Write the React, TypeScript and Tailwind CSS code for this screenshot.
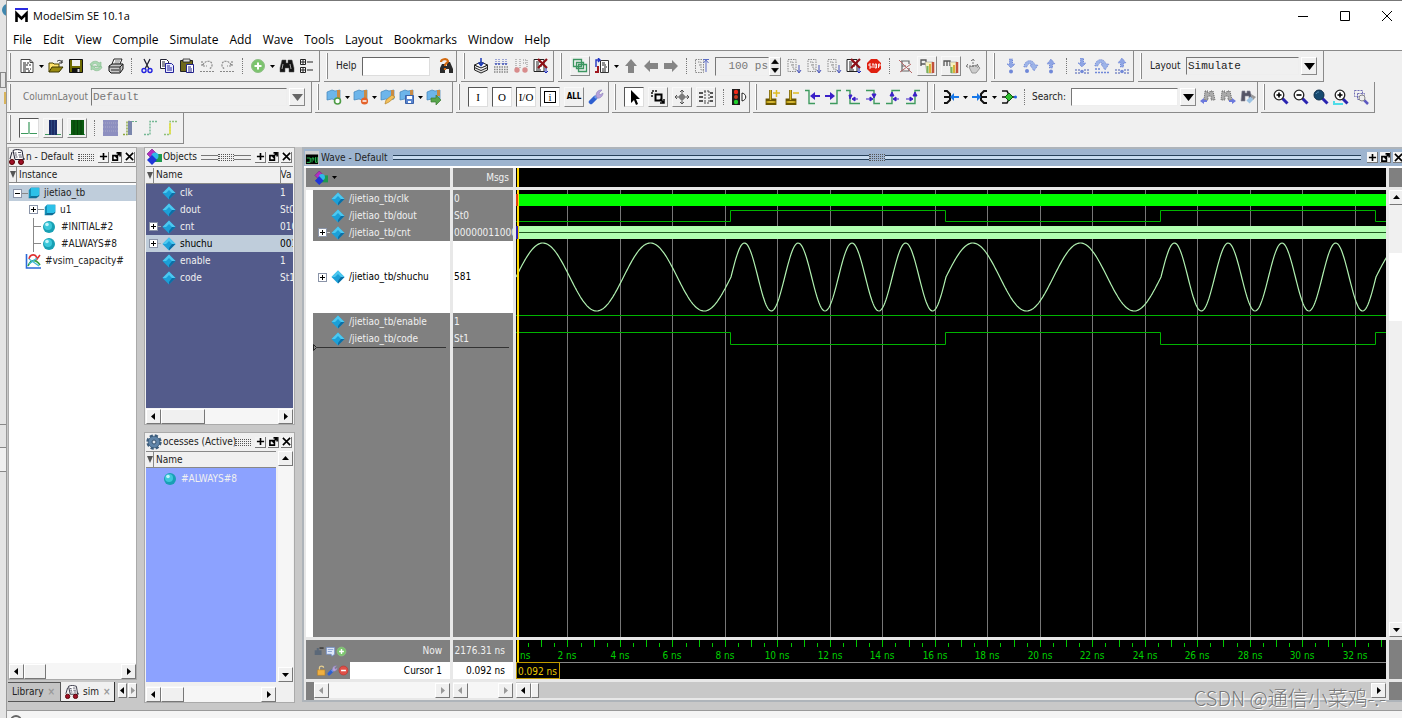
import type { ReactNode } from "react";

const icons: Record<string, ReactNode> = {
  doc: (
    <>
      <path d="M2 1.500h9l3 3v10H2z" fill="#fff" stroke="#444" />
      <path d="M11 1.500v3h3" fill="none" stroke="#444" />
      <path d="M4 5h3M8 5h2M4 7h5M10 7h2M4 9h3M4 11h6M11 11h1M4 13h3M9 13h2" stroke="#222" />
    </>
  ),
  open: (
    <>
      <path d="M1 14V5h4l1 1h5v3" fill="#ffe36b" stroke="#4a4300" />
      <path d="M1 14l3-5h11l-4 5z" fill="#9a8b10" stroke="#3b3500" />
      <path d="M9 3.500c2-2 4-1 5 1M14 2v3h-3" fill="none" stroke="#222" />
    </>
  ),
  save: (
    <>
      <path d="M1.500 1.500h13v13h-13z" fill="#6d6a00" stroke="#111" />
      <path d="M4 2h8v6H4z" fill="#eee" />
      <path d="M4 10h8v5H4z" fill="#111" />
      <path d="M9.500 11h2v3h-2z" fill="#ddd" />
    </>
  ),
  refresh: (
    <>
      <path d="M2 7c1-4 7-5 9-2l2-1v5H8l1.500-2C8 5 5 5 4 8z" fill="#a9d8b1" stroke="#83b98c" strokeWidth=".6" />
      <path d="M14 9c-1 4-7 5-9 2l-2 1V8h5l-1.500 1.500C8 11 11 11 12 8z" fill="#a9d8b1" stroke="#83b98c" strokeWidth=".6" />
    </>
  ),
  print: (
    <>
      <path d="M4 6l2-5h8l-2 5" fill="#fff" stroke="#222" />
      <path d="M7 3h5M6.500 5h5" stroke="#555" strokeWidth=".8" />
      <path d="M1 8l3-2h11v5l-3 4H3l-2-2z" fill="#c8c8c8" stroke="#111" />
      <path d="M1 9h11l3-3M3 12h8M12 9v5" fill="none" stroke="#222" />
    </>
  ),
  cut: (
    <>
      <path d="M5 1l5 10M11 1L6 11" stroke="#223" strokeWidth="1.300" />
      <circle cx="5" cy="12.500" r="2" fill="none" stroke="#2222e0" strokeWidth="1.400" />
      <circle cx="11" cy="12.500" r="2" fill="none" stroke="#2222e0" strokeWidth="1.400" />
    </>
  ),
  copy: (
    <>
      <path d="M1.500 1.500h6l2 2v7h-8z" fill="#fff" stroke="#223" />
      <path d="M3 4h3M3 6h5M3 8h5" stroke="#223" />
      <path d="M6.500 5.500h6l2 2v7h-8z" fill="#e8eaff" stroke="#22229a" />
      <path d="M8 8h3M8 10h5M8 12h5" stroke="#22229a" />
    </>
  ),
  paste: (
    <>
      <path d="M1.500 2.500h12v11h-12z" fill="#6f681c" stroke="#222" />
      <path d="M4 1h7v3H4z" fill="#ddd" stroke="#222" strokeWidth=".8" />
      <path d="M7.500 6.500h7v8h-7z" fill="#fff" stroke="#22228a" />
      <path d="M9 9h3M9 11h4M9 13h4" stroke="#22228a" />
    </>
  ),
  undo: (
    <path d="M3 3v5h5M4 7c2-5 9-5 9 0 0 2-1 3-3 4M1 13.500h14" fill="none" stroke="#888" strokeWidth="1.200" strokeDasharray="2 1" />
  ),
  redo: (
    <path d="M13 3v5H8M12 7c-2-5-9-5-9 0 0 2 1 3 3 4M1 13.500h14" fill="none" stroke="#888" strokeWidth="1.200" strokeDasharray="2 1" />
  ),
  plus: (
    <>
      <circle cx="8" cy="8" r="6.500" fill="#7cc46e" stroke="#8fbf86" />
      <path d="M8 4.500v7M4.500 8h7" stroke="#fff" strokeWidth="2" />
    </>
  ),
  binoc: (
    <>
      <path d="M3 2h4v3h2V2h4l2 8v4h-5v-4H6v4H1v-4z" fill="#161616" stroke="#555" strokeWidth=".5" />
      <path d="M4 6l-1 5M11 6l1 5" stroke="#ccc" strokeWidth=".8" />
    </>
  ),
  tree: (
    <>
      <path d="M1.500 1.500h5v5h-5zM1.500 9.500h5v5h-5z" fill="#fff" stroke="#222" />
      <path d="M2 4h4M4 2v4M2 12h4M4 10v4M8 4h6M8 12h6" stroke="#222" />
    </>
  ),
  helpfind: (
    <>
      <path d="M4 6h3v2h2V4h3l3 7v4h-4v-4H7v4H2v-5z" fill="#2a2a2a" />
      <path d="M3 4c0-3 6-4 7-1 0 2-3 2-3 5M7 10v2" fill="none" stroke="#d26a10" strokeWidth="2.200" />
    </>
  ),
  compile: (
    <>
      <path d="M1.500 7l6.500 3 6.500-3v5L8 15l-6.500-3z" fill="#ddd" stroke="#222" />
      <path d="M1.500 7L8 4l6.500 3L8 10zM1.500 9.500L8 12.500l6.500-3" fill="#fff" stroke="#222" />
      <path d="M8 0v7M5.500 4.500L8 7.500l2.500-3" fill="none" stroke="#1d3bb8" strokeWidth="1.500" />
    </>
  ),
  compileall: (
    <>
      <path d="M3 1v5M6 1v5M10 1v5M13 1v5" stroke="#4a5bb8" strokeDasharray="1 1" />
      <path d="M2 5l1 2 1-2M5 5l1 2 1-2M9 5l1 2 1-2M12 5l1 2 1-2" fill="none" stroke="#4a5bb8" />
      <path d="M1 9h14M1 11.500h14M1 14h14" stroke="#888" strokeWidth="1.300" strokeDasharray="1.500 1" />
    </>
  ),
  simstart: (
    <>
      <path d="M3 1v9M7 1v9M10 2h4v8M10 5h4" fill="none" stroke="#888" strokeDasharray="1 1" />
      <circle cx="4" cy="12" r="2.700" fill="#d88c8c" />
      <circle cx="12" cy="12" r="2.700" fill="#d88c8c" />
    </>
  ),
  breaksim: (
    <>
      <path d="M1 1.500h10v12H1z" fill="#fff" stroke="#222" />
      <path d="M3 4h5M3 6h3M3 8h6M3 10h4M3 12h5" stroke="#222" />
      <path d="M5 1l9 9M14 1L5 10" stroke="#8e1018" strokeWidth="2.200" />
      <path d="M13 10v4M11 13l2 2 2-2" stroke="#1d2bb8" fill="none" />
    </>
  ),
  restartGreen: (
    <path d="M1.500 1.500h8v7h-8zM6.500 6.500h8v7h-8zM4.500 4.500h7v6h-7z" fill="none" stroke="#3c9661" strokeWidth="1.300" />
  ),
  restart: (
    <>
      <path d="M6.500 2.500h8v12h-8z" fill="#fff" stroke="#333" />
      <path d="M8 5h3M8 7h4M10 9h3M8 11h4M8 13h4" stroke="#222" />
      <path d="M2 9V2h4M4 0l2 2-2 2" fill="none" stroke="#2032c0" strokeWidth="1.400" />
      <path d="M4 8v6H1" fill="none" stroke="#a01820" strokeWidth="2" />
    </>
  ),
  up: <path d="M8 1l6 7h-3v7H5V8H2z" fill="#858585" />,
  left: <path d="M1 8l6-6v3h8v6H7v3z" fill="#858585" />,
  right: <path d="M15 8L9 2v3H1v6h8v3z" fill="#858585" />,
  runup: (
    <>
      <path d="M1.500 1.500h8v13h-8zM4 4h3v8h3M5 7h2" fill="none" stroke="#888" strokeDasharray="1.500 1" />
      <path d="M12 14V3M9.500 5L12 2l2.500 3M9 1.500h6" fill="none" stroke="#5c6dc4" />
    </>
  ),
  run: (
    <>
      <path d="M2 1.500h8v12H2zM4 4h3v7h3M5 7h3" fill="none" stroke="#888" strokeDasharray="1.500 1" />
      <path d="M13 7v7M11 12l2 3 2-3" fill="none" stroke="#4652b8" />
    </>
  ),
  stop: (
    <>
      <path d="M5 1h6l4 4v6l-4 4H5l-4-4V5z" fill="#e02010" />
      <path d="M5 6H3v2h2v2H3M6 6h2M7 6v4M9 6h1.500v4H9zM12.500 10V6H14v2h-1.500" fill="none" stroke="#fff" strokeWidth=".9" />
    </>
  ),
  nocov: (
    <>
      <path d="M4 3h8v3M5 3v10M4 13h8v-3M5 8h4" fill="none" stroke="#666" strokeWidth="1.200" />
      <path d="M2 2l13 13M14 6L3 14" stroke="#b86a6a" />
    </>
  ),
  profp: (
    <>
      <path d="M2 8V2h5v4H2" fill="none" stroke="#555" strokeWidth="1.300" />
      <path d="M6 4h8v11H8z" fill="#f6f1c0" stroke="#999" strokeWidth=".6" />
      <path d="M8.500 8v7" stroke="#79b35a" strokeWidth="2" />
      <path d="M11 6v9" stroke="#d9b23a" strokeWidth="2" />
      <path d="M14 4v11" stroke="#c2513e" strokeWidth="2.500" />
    </>
  ),
  profm: (
    <>
      <path d="M1 8V3h3v5M4 3h3v5" fill="none" stroke="#555" strokeWidth="1.300" />
      <path d="M7 4h7v11H8z" fill="#f6f1c0" stroke="#999" strokeWidth=".6" />
      <path d="M8.500 9v6" stroke="#79b35a" strokeWidth="2" />
      <path d="M11 7v8" stroke="#d9b23a" strokeWidth="2" />
      <path d="M14 4v11" stroke="#c2513e" strokeWidth="2.500" />
    </>
  ),
  hand: (
    <>
      <path d="M4 9l8-2 3 3-4 5H7z" fill="#ccc" stroke="#999" />
      <path d="M8 1v8M1 8h12M6 3l2-2 2 2M3 6L1 8l2 2M12 6l2 2-2 2" fill="none" stroke="#777" strokeDasharray="2 1" />
    </>
  ),
  stepin: (
    <>
      <path d="M6.500 1h3v5H12l-4 4-4-4h2.500z" fill="#8ea5e4" stroke="#6f86d6" strokeDasharray="1 1" />
      <circle cx="8" cy="13.500" r="2" fill="#7088d8" />
    </>
  ),
  stepover: (
    <>
      <path d="M1 9c0-7 9-9 11-2h3l-4 6-4-6h2C8 4 4 6 4 9z" fill="#9db4e8" stroke="#6f86d6" strokeDasharray="1 1" />
      <circle cx="4" cy="13" r="2" fill="#7088d8" />
    </>
  ),
  stepout: (
    <>
      <path d="M6.500 10V6H4l4-5 4 5H9.500v4z" fill="#8ea5e4" stroke="#6f86d6" strokeDasharray="1 1" />
      <circle cx="8" cy="13.500" r="2" fill="#7088d8" />
    </>
  ),
  cstepin: (
    <>
      <path d="M6.500 0h3v5H12l-4 4-4-4h2.500z" fill="#8ea5e4" stroke="#6f86d6" strokeDasharray="1 1" />
      <path d="M2 11v5M5 11v5M11 11v5M14 11v5" stroke="#7d8cc8" strokeWidth="1.500" strokeDasharray="2 1" />
      <circle cx="8" cy="13.500" r="1.800" fill="#7088d8" />
    </>
  ),
  cstepover: (
    <>
      <path d="M1 8c0-7 9-9 11-2h3l-4 6-4-6h2C8 3 4 5 4 8z" fill="#9db4e8" stroke="#6f86d6" strokeDasharray="1 1" />
      <path d="M1 11h5M1 14.500h14" stroke="#7088d8" strokeWidth="1.500" strokeDasharray="2 1" />
    </>
  ),
  cstepout: (
    <>
      <path d="M6.500 9V5H4l4-5 4 5H9.500v4z" fill="#8ea5e4" stroke="#6f86d6" strokeDasharray="1 1" />
      <path d="M2 11v5M5 11v5M11 11v5M14 11v5" stroke="#7d8cc8" strokeWidth="1.500" strokeDasharray="2 1" />
      <circle cx="8" cy="13.500" r="1.800" fill="#7088d8" />
    </>
  ),
  bookadd: (
    <>
      <path d="M1 3l5-2 3 1 5-1v9l-5 1-3-1-5 1z" fill="#6db5ea" stroke="#3f83b8" strokeWidth=".7" />
      <path d="M11 1h3v9h-3z" fill="#c98b45" />
      <circle cx="11.500" cy="12" r="3" fill="#fff" stroke="#4f9c46" strokeWidth="1.600" />
    </>
  ),
  bookdel: (
    <>
      <path d="M1 3l5-2 3 1 5-1v9l-5 1-3-1-5 1z" fill="#6db5ea" stroke="#3f83b8" strokeWidth=".7" />
      <path d="M11 1h3v9h-3z" fill="#c98b45" />
      <circle cx="11.500" cy="12" r="3.600" fill="#e4622a" />
      <path d="M9.500 12h4" stroke="#fff" strokeWidth="1.500" />
    </>
  ),
  bookedit: (
    <>
      <path d="M1 3l5-2 3 1 5-1v9l-5 1-3-1-5 1z" fill="#6db5ea" stroke="#3f83b8" strokeWidth=".7" />
      <path d="M11 1h3v6h-3z" fill="#c98b45" />
      <path d="M5 15l1-4 6-5 3 2-6 5z" fill="#f3c05c" stroke="#b8862a" strokeWidth=".7" />
    </>
  ),
  booksave: (
    <>
      <path d="M1 3l5-2 3 1 5-1v9l-5 1-3-1-5 1z" fill="#6db5ea" stroke="#3f83b8" strokeWidth=".7" />
      <path d="M11 1h3v5h-3z" fill="#c98b45" />
      <path d="M6.500 6.500h8v8h-8z" fill="#5a86d0" stroke="#3b62a8" />
      <path d="M8 7h5v3H8zM9 12h3v2H9z" fill="#fff" />
    </>
  ),
  bookgo: (
    <>
      <path d="M1 3l5-2 3 1 5-1v9l-5 1-3-1-5 1z" fill="#6db5ea" stroke="#3f83b8" strokeWidth=".7" />
      <path d="M11 1h3v6h-3z" fill="#c98b45" />
      <path d="M5 9h5V6l5 5-5 5v-3H5z" fill="#57a54b" stroke="#3d7a35" strokeWidth=".7" />
    </>
  ),
  wrench: (
    <>
      <path d="M3 13l4-4" stroke="#2e5fd0" strokeWidth="4.500" strokeLinecap="round" />
      <path d="M7 9l3-3" stroke="#6f9be8" strokeWidth="3" />
      <path d="M8 7c0-5 3-6 6-6l-3 3 1 2 3-2c0 3-3 6-6 5z" fill="#b7a2dc" stroke="#8880b8" strokeWidth=".6" />
    </>
  ),
  pointer: <path d="M5 1v13l3-3 2 5 2-1-2-5h4z" fill="#000" />,
  zoombox: (
    <>
      <path d="M2 8V2h6" fill="none" stroke="#111" strokeWidth="1.500" strokeDasharray="2 1" />
      <path d="M5.500 5.500h6v6h-6z" fill="none" stroke="#000" strokeWidth="2" />
      <path d="M10 10l4 4M14 10v4h-4" fill="none" stroke="#000" strokeWidth="1.500" />
    </>
  ),
  pan: (
    <path d="M8 1v14M1 8h14M6 3l2-2 2 2M6 13l2 2 2-2M3 6L1 8l2 2M13 6l2 2-2 2M6 6h4v4H6z" fill="none" stroke="#555" />
  ),
  twocursor: (
    <>
      <path d="M1 4h4M1 8h4M1 12h4M12 4h3M12 8h3M12 12h3" stroke="#222" strokeWidth="1.600" />
      <path d="M7 2v12M11 2v12M6 2h5M6 14h5" stroke="#444" strokeDasharray="2 1" />
    </>
  ),
  traffic: (
    <>
      <path d="M1 0h8v16H1z" fill="#1d1d1d" />
      <circle cx="5" cy="3" r="2.200" fill="#f02818" />
      <circle cx="5" cy="8" r="2" fill="#c93a20" />
      <circle cx="5" cy="13" r="2.200" fill="#1fd02c" />
      <path d="M11 4v8c5-1 5-7 0-8z" fill="#fff" stroke="#222" />
    </>
  ),
  cursoradd: (
    <>
      <path d="M5.500 1v10M2 11h8v4H2z" fill="none" stroke="#6a5600" strokeWidth="2.800" />
      <path d="M5.500 1v10M1.500 13h9M8 4h7M11.500 1v7" stroke="#e0bc20" strokeWidth="1.500" />
    </>
  ),
  cursordel: (
    <>
      <path d="M5.500 1v10M2 11h8v4H2z" fill="none" stroke="#6a5600" strokeWidth="2.800" />
      <path d="M5.500 1v10M1.500 13h9M8 4h6" stroke="#e0bc20" strokeWidth="1.500" />
    </>
  ),
  prevedge: (
    <>
      <path d="M0 1.500h4v13h6" fill="none" stroke="#3d9a5e" strokeWidth="1.400" />
      <path d="M5 7l5-4v3h5v2h-5v3z" fill="#3a1fc8" />
    </>
  ),
  nextedge: (
    <>
      <path d="M16 1.500h-4v13H5" fill="none" stroke="#3d9a5e" strokeWidth="1.400" />
      <path d="M10 7L5 3v3H0v2h5v3z" fill="#3a1fc8" />
    </>
  ),
  prevfall: (
    <>
      <path d="M1 1.500h4v13h10" fill="none" stroke="#3d9a5e" strokeWidth="1.400" />
      <path d="M4 6h3l-2 4zM8 10h5M10 8l-3 2 3 2z" fill="#3a1fc8" stroke="#3a1fc8" />
    </>
  ),
  nextfall: (
    <>
      <path d="M1 1.500h8v13h6" fill="none" stroke="#3d9a5e" strokeWidth="1.400" />
      <path d="M7 5h4L9 9zM1 10h5M5 8l3 2-3 2z" fill="#3a1fc8" stroke="#3a1fc8" />
    </>
  ),
  prevrise: (
    <>
      <path d="M1 14.500h6v-13h8" fill="none" stroke="#3d9a5e" strokeWidth="1.400" />
      <path d="M5 7h4L7 3zM9 10h5M11 8l-3 2 3 2z" fill="#3a1fc8" stroke="#3a1fc8" />
    </>
  ),
  nextrise: (
    <>
      <path d="M1 14.500h9v-13h5" fill="none" stroke="#3d9a5e" strokeWidth="1.400" />
      <path d="M8 7h4l-2-4zM1 10h5M5 8l3 2-3 2z" fill="#3a1fc8" stroke="#3a1fc8" />
    </>
  ),
  expand: (
    <>
      <path d="M1 2h3l3 3v6l-3 3H1M1 8h6" fill="none" stroke="#111" strokeWidth="2" />
      <path d="M7 8l4-4v3h5v2h-5v3z" fill="#1878e8" />
    </>
  ),
  collapse: (
    <>
      <path d="M15 2h-3L9 5v6l3 3h3M9 8h6" fill="none" stroke="#111" strokeWidth="2" />
      <path d="M9 8L5 4v3H0v2h5v3z" fill="#1878e8" />
    </>
  ),
  expandnode: (
    <>
      <path d="M1 2h5l3 6-3 6H1M1 8h14" fill="none" stroke="#111" strokeWidth="1.600" />
      <path d="M8 4l4 4-4 4-4-4z" fill="#30c030" stroke="#0b5a0b" />
      <circle cx="14.500" cy="8" r="1.500" fill="#2060e0" />
    </>
  ),
  findprev: (
    <>
      <path d="M5 2h3v2h2V2h3l2 9h-4V7H8v4H4z" fill="#aaa" stroke="#666" strokeDasharray="1 1" />
      <path d="M0 12l4-3v2h3v2H4v2z" fill="#6b78dc" />
    </>
  ),
  findnext: (
    <>
      <path d="M2 2h3v2h2V2h3l2 9H8V7H5v4H1z" fill="#aaa" stroke="#666" strokeDasharray="1 1" />
      <path d="M16 12l-4-3v2H9v2h3v2z" fill="#6b78dc" />
    </>
  ),
  findopt: (
    <>
      <path d="M2 2h3v2h2V2h3l2 7H9V7H5v5H1z" fill="#556" stroke="#889" strokeWidth=".6" />
      <path d="M8 13l4-4" stroke="#9cc3e4" strokeWidth="4.500" />
      <path d="M11 5l5 3-3 3z" fill="#999" />
    </>
  ),
  zoomin: (
    <>
      <path d="M9.500 9.500l5 5" stroke="#2a24b0" strokeWidth="3" />
      <circle cx="6" cy="6" r="4.800" fill="#fff" stroke="#222" strokeWidth="1.300" />
      <path d="M3.500 6h5M6 3.500v5" stroke="#000" strokeWidth="1.600" />
    </>
  ),
  zoomout: (
    <>
      <path d="M9.500 9.500l5 5" stroke="#2a24b0" strokeWidth="3" />
      <circle cx="6" cy="6" r="4.800" fill="#fff" stroke="#222" strokeWidth="1.300" />
      <path d="M3.500 6h5" stroke="#000" strokeWidth="1.600" />
    </>
  ),
  zoomfull: (
    <>
      <path d="M9.500 9.500l5 5" stroke="#2a24b0" strokeWidth="3" />
      <circle cx="6" cy="6" r="5" fill="#174a70" stroke="#0d2d48" />
      <path d="M3 5c1-2 2-2 3-2" stroke="#5f92b8" fill="none" />
    </>
  ),
  zoomcursor: (
    <>
      <path d="M1 12v3h9" fill="none" stroke="#4fdce8" strokeWidth="2" />
      <path d="M9.500 9.500l5 5" stroke="#2a24b0" strokeWidth="3" />
      <circle cx="7" cy="6" r="4.800" fill="#fff" stroke="#222" strokeWidth="1.300" />
      <path d="M4.500 6h5M7 3.500v5" stroke="#000" strokeWidth="1.600" />
    </>
  ),
  zoomlast: (
    <>
      <path d="M1.500 1.500h8v6h-8zM4.500 4.500h7v6h-7z" fill="none" stroke="#6e6cb4" strokeDasharray="2 1" />
      <path d="M11 11l4 4" stroke="#5c58c0" strokeWidth="2.500" />
      <circle cx="9" cy="9" r="3" fill="#eee" stroke="#888" />
    </>
  ),
  viewlow: (
    <path d="M0 13.500h7M9 13.500h7M8 2v12" stroke="#3d9a5e" strokeWidth="1.200" />
  ),
  viewblue: (
    <>
      <path d="M0 14.500h16" stroke="#3d9a5e" />
      <path d="M4 0h8v15H4z" fill="#1c2c66" />
      <path d="M6.500 0v15M9.500 0v15" stroke="#355a90" strokeWidth=".6" />
    </>
  ),
  viewgreen: (
    <>
      <path d="M0 14.500h16" stroke="#3d9a5e" />
      <path d="M2 0h13v15H2z" fill="#0a5a10" />
      <path d="M5 0v15M8.500 0v15M12 0v15" stroke="#063a08" strokeWidth=".8" />
    </>
  ),
  viewgray: (
    <>
      <path d="M1 0h15v16H1z" fill="#8d8fc0" />
      <path d="M1 3h15M1 7h15M1 11h15" stroke="#a9a9c8" strokeWidth="1" strokeDasharray="1 1" />
    </>
  ),
  edgeboth: (
    <>
      <path d="M1 14.500h4v-13h4" fill="none" stroke="#8aa83c" strokeWidth="1.400" strokeDasharray="2 1" />
      <path d="M8 1v14" stroke="#7a86ac" strokeWidth="4" />
      <path d="M10 1.500h5" stroke="#6fb08a" strokeDasharray="2 1" />
    </>
  ),
  edgeteal: (
    <path d="M2 14.500h6v-13h7" fill="none" stroke="#74b894" strokeWidth="1.400" strokeDasharray="2 1" />
  ),
  edgeyellow: (
    <>
      <path d="M2 14.500h6v-13h7" fill="none" stroke="#8fc07a" strokeWidth="1.400" strokeDasharray="2 1" />
      <path d="M8 3v11" stroke="#e4e040" strokeWidth="1.600" />
    </>
  ),
  simdoc: (
    <>
      <path d="M4 1.500c3-1.500 6-1 9 0l1.500 9H6z" fill="#fff" stroke="#223" />
      <path d="M5.500 4h2M9 3.500h3M6 6h2M9.500 6h3M6.500 8h2M10 8h3" stroke="#556" />
      <path d="M3 3L1 10M15 9v2" stroke="#223" />
      <circle cx="3" cy="13" r="2.500" fill="#a01028" stroke="#500" />
      <circle cx="12" cy="13" r="2.500" fill="#a01028" stroke="#500" />
    </>
  ),
  shapes: (
    <>
      <path d="M6 0l5 5-5 5-5-5z" fill="#b32fc0" stroke="#6b1580" strokeWidth=".6" />
      <path d="M8 5h8v8H8z" fill="#1d9a50" />
      <circle cx="9" cy="7" r="3.500" fill="#2fb8e8" />
      <path d="M6 6l5 5-5 5-5-5z" fill="#1f36d8" />
    </>
  ),
  gear: (
    <>
      <circle cx="8" cy="8" r="6.200" fill="none" stroke="#3c5d7c" strokeWidth="3" strokeDasharray="3 1.870" />
      <circle cx="8" cy="8" r="5.800" fill="#5f84a8" stroke="#3c5d7c" strokeWidth=".8" />
      <circle cx="8" cy="8" r="2" fill="#dfe8f0" stroke="#34506c" />
    </>
  ),
  wavewin: (
    <>
      <path d="M0 0h16v16H0z" fill="#d0d0d0" />
      <path d="M1 4h14v11H1z" fill="#000" />
      <path d="M2 8h4v5H2M8 8v5M8 8h2v3M12 7v6h2V7" fill="none" stroke="#28d058" />
    </>
  ),
  capacity: (
    <>
      <path d="M1.500 1v14H16" fill="none" stroke="#2a6ad8" strokeWidth="1.600" />
      <path d="M4 6c1-5 7-6 8 0l3-4" fill="none" stroke="#e03030" strokeWidth="1.600" />
      <path d="M3 13c3-7 8-7 12-1" fill="none" stroke="#30a040" strokeWidth="1.600" />
      <path d="M4 6l10 7M12 5l-8 6" fill="none" stroke="#3fb8d8" strokeWidth="1.200" />
    </>
  ),
  diamond: (
    <>
      <path d="M8 1.500L14.500 8 8 14.500 1.500 8z" fill="#1ba0d8" />
      <path d="M8 1.500L14.500 8 11 8 8 5 5 8H1.500z" fill="#4cc8f0" />
      <path d="M8 14.500L14.500 8H11l-3 4z" fill="#0d6ea4" />
    </>
  ),
  ball: (
    <>
      <circle cx="8" cy="8" r="6" fill="#18a0b4" />
      <circle cx="7" cy="7" r="4" fill="#3cc8da" />
      <circle cx="6" cy="5.500" r="1.800" fill="#c4f4fa" />
    </>
  ),
  cube: (
    <>
      <path d="M4 1h11v11l-4 3H1z" fill="#0f6e96" />
      <path d="M4 1h11v9l-2 2H4z" fill="#2cc0e8" />
      <path d="M1 15V4l3-3v11z" fill="#1590b8" />
    </>
  ),
  lock: (
    <>
      <path d="M5 8V4c0-3 6-3 6 0" fill="none" stroke="#e8d090" strokeWidth="1.800" />
      <path d="M2 7h11v8H2z" fill="#f0b040" stroke="#b07a20" strokeWidth=".7" />
    </>
  ),
  minus: (
    <>
      <circle cx="8" cy="8" r="6.500" fill="#e05048" stroke="#b83830" />
      <path d="M4.500 8h7" stroke="#fff" strokeWidth="2.200" />
    </>
  ),
  nowset: (
    <>
      <path d="M1 13V6h3V3h3v3h4v7z" fill="#5b6878" />
      <path d="M8 3h6" stroke="#333" strokeWidth="2" />
    </>
  ),
  note: (
    <>
      <path d="M2 2h12v10l-4 3-1-3H2z" fill="#dfe9fa" stroke="#6888c8" />
      <path d="M4 5h8M4 8h6" stroke="#6888c8" />
    </>
  ),
};

function Icon({ name, className = "size-4" }: { name: string; className?: string }) {
  return (
    <svg viewBox="0 0 16 16" className={`shrink-0 ${className}`} aria-hidden="true">
      {icons[name]}
    </svg>
  );
}

function Tool({ name }: { name: string }) {
  return (
    <button type="button" aria-label={name} className="flex size-4 shrink-0">
      <Icon name={name} />
    </button>
  );
}

function Boxed({ name, pressed = false, text }: { name: string; pressed?: boolean; text?: string }) {
  const look = pressed
    ? "border-[#555] border-r-[#ddd] border-b-[#ddd] bg-white"
    : "border-[#f8f8f8] border-r-[#888] border-b-[#888] bg-[#f0f0f0]";
  return (
    <button
      type="button"
      aria-label={name}
      aria-pressed={pressed}
      className={`flex size-5 shrink-0 items-center justify-center border ${look}`}
    >
      {text ? <span className="font-['Liberation_Serif',serif] text-[11px] text-black">{text}</span> : <Icon name={name} />}
    </button>
  );
}

function Arrow() {
  return (
    <button type="button" aria-label="More" className="flex w-[5px] shrink-0 justify-center">
      <svg viewBox="0 0 5 3" className="h-[3px] w-[5px]" aria-hidden="true">
        <path d="M0 0h5L2.500 3z" fill="#000" />
      </svg>
    </button>
  );
}

function Sep() {
  return <span className="mx-[3px] h-4 w-px shrink-0 border-l border-dotted border-[#777]" />;
}

function Group({ className, children }: { className: string; children: ReactNode }) {
  return (
    <div className={`flex h-[31px] shrink-0 items-center border-r border-b border-[#8a8a8a] ${className}`}>
      <span className="mr-1 ml-[2px] h-[26px] w-[2px] shrink-0 border-r border-[#8a8a8a] bg-white" />
      {children}
    </div>
  );
}

type ComboProps = {
  id: string;
  value: string;
  className: string;
  muted?: boolean;
};

function Combo({ id, value, className, muted = false }: ComboProps) {
  return (
    <span className={`flex h-[18px] gap-[2px] ${className}`}>
      <select
        id={id}
        className={`min-w-0 flex-1 appearance-none border border-[#777] border-r-[#eee] border-b-[#eee] px-px font-['Liberation_Mono',monospace] text-[11px] leading-4 ${
          muted ? "text-[#777]" : "text-[#222]"
        } ${value ? "bg-[#f0f0f0]" : "bg-white"}`}
      >
        <option>{value}</option>
      </select>
      <span className="pointer-events-none flex w-4 items-center justify-center border border-white border-r-[#888] border-b-[#888]">
        <svg viewBox="0 0 11 7" className="h-[7px] w-[11px]" aria-hidden="true">
          <path d="M0 0h11L5.500 7z" fill={muted ? "#666" : "#000"} />
        </svg>
      </span>
    </span>
  );
}

function Toolbars() {
  return (
    <div className="border-t border-[#8a8a8a] bg-[#f0f0f0]">
      <div className="flex gap-1">
        <Group className="w-[313px] gap-1">
          <Tool name="doc" />
          <Arrow />
          <Tool name="open" />
          <Tool name="save" />
          <Tool name="refresh" />
          <Tool name="print" />
          <Sep />
          <Tool name="cut" />
          <Tool name="copy" />
          <Tool name="paste" />
          <Tool name="undo" />
          <Tool name="redo" />
          <Sep />
          <Tool name="plus" />
          <Arrow />
          <Tool name="binoc" />
          <Tool name="tree" />
        </Group>
        <Group className="w-[133px]">
          <label htmlFor="help" className="ml-1 w-[26px]">Help</label>
          <input id="help" className="mr-2 h-[19px] w-[68px] border border-[#666] border-r-[#ddd] border-b-[#ddd] bg-white" />
          <Tool name="helpfind" />
        </Group>
        <Group className="w-[93px] gap-1">
          <Tool name="compile" />
          <Tool name="compileall" />
          <Tool name="simstart" />
          <Tool name="breaksim" />
        </Group>
        <Group className="w-[429px] gap-1">
          <Boxed name="restartGreen" />
          <Tool name="restart" />
          <Arrow />
          <Tool name="up" />
          <Tool name="left" />
          <Tool name="right" />
          <Sep />
          <Tool name="runup" />
          <span className="mx-px flex h-[19px] items-stretch">
            <input
              aria-label="Run length"
              defaultValue="100 ps"
              className="w-[54px] border border-[#777] border-r-[#eee] border-b-[#eee] bg-[#f0f0f0] text-right font-['Liberation_Mono',monospace] text-[11px] text-[#777]"
            />
            <button type="button" aria-label="Adjust run length" className="flex w-3 items-center justify-center border border-white border-r-[#888] border-b-[#888]">
              <svg viewBox="0 0 8 16" className="h-4 w-2" aria-hidden="true">
                <path d="M0 6h8L4 1zM0 10h8l-4 5zM0 8h8" fill="#000" stroke="#999" strokeWidth=".3" />
              </svg>
            </button>
          </span>
          <Tool name="run" />
          <Tool name="run" />
          <Tool name="run" />
          <Tool name="breaksim" />
          <Tool name="stop" />
          <Sep />
          <Tool name="nocov" />
          <Boxed name="profp" />
          <Boxed name="profm" />
          <Tool name="hand" />
        </Group>
        <Group className="w-[143px] gap-1">
          <Tool name="stepin" />
          <Tool name="stepover" />
          <Tool name="stepout" />
          <Sep />
          <Tool name="cstepin" />
          <Tool name="cstepover" />
          <Tool name="cstepout" />
        </Group>
        <Group className="w-[186px]">
          <label htmlFor="layout" className="ml-1 w-[36px]">Layout</label>
          <Combo id="layout" value="Simulate" className="w-[131px]" />
        </Group>
      </div>
      <div className="flex gap-[3px]">
        <Group className="w-[305px]">
          <label htmlFor="columns" className="ml-2 w-[68px] text-[#777]">ColumnLayout</label>
          <Combo id="columns" value="Default" muted className="w-[214px]" />
        </Group>
        <Group className="w-[138px] gap-[3px]">
          <Tool name="bookadd" />
          <Arrow />
          <Tool name="bookdel" />
          <Arrow />
          <Tool name="bookedit" />
          <Tool name="booksave" />
          <Arrow />
          <Tool name="bookgo" />
        </Group>
        <Group className="w-[153px] gap-1">
          <Boxed name="Inputs" pressed text="I" />
          <Boxed name="Outputs" pressed text="O" />
          <Boxed name="Inouts" pressed text="I/O" />
          <button type="button" aria-label="Internal" aria-pressed="true" className="flex size-5 shrink-0 items-center justify-center border border-[#555] border-r-[#ddd] border-b-[#ddd] bg-white">
            <span className="flex size-3 items-center justify-center border border-black font-['Liberation_Serif',serif] text-[11px]">i</span>
          </button>
          <button type="button" className="flex size-5 shrink-0 items-center justify-center border border-[#f8f8f8] border-r-[#888] border-b-[#888] font-['DejaVu_Sans_Condensed',sans-serif] text-[8px] font-bold text-black">
            ALL
          </button>
          <Tool name="wrench" />
        </Group>
        <Group className="w-[138px] gap-1">
          <Boxed name="pointer" pressed />
          <Boxed name="zoombox" />
          <Boxed name="pan" />
          <Boxed name="twocursor" />
          <Sep />
          <Tool name="traffic" />
        </Group>
        <Group className="w-[175px] gap-1">
          <Tool name="cursoradd" />
          <Tool name="cursordel" />
          <Tool name="prevedge" />
          <Tool name="nextedge" />
          <Tool name="prevfall" />
          <Tool name="nextfall" />
          <Tool name="prevrise" />
          <Tool name="nextrise" />
        </Group>
        <Group className="w-[327px] gap-1">
          <Tool name="expand" />
          <Arrow />
          <Tool name="collapse" />
          <Arrow />
          <Tool name="expandnode" />
          <Sep />
          <label htmlFor="search" className="w-[35px]">Search:</label>
          <Combo id="search" value="" className="w-[125px]" />
          <Tool name="findprev" />
          <Tool name="findnext" />
          <Tool name="findopt" />
        </Group>
        <Group className="w-[114px] gap-1">
          <Tool name="zoomin" />
          <Tool name="zoomout" />
          <Tool name="zoomfull" />
          <Tool name="zoomcursor" />
          <Tool name="zoomlast" />
        </Group>
      </div>
      <div className="flex">
        <Group className="w-[177px] gap-1">
          <Boxed name="viewlow" pressed />
          <Boxed name="viewblue" />
          <Boxed name="viewgreen" />
          <Sep />
          <Tool name="viewgray" />
          <Tool name="edgeboth" />
          <Tool name="edgeteal" />
          <Tool name="edgeyellow" />
        </Group>
      </div>
    </div>
  );
}

function PanelButtons() {
  return (
    <span className="flex shrink-0 gap-[2px]">
      {["M5 1v8M1 5h8", "M1 4h5v5H1zM4 6l4-4M5 1h4v4", "M1 1l8 8M9 1L1 9"].map((d, i) => (
        <button
          key={d}
          type="button"
          aria-label={["Add", "Undock", "Close"][i]}
          className="flex size-[11px] items-center justify-center border-r border-b border-[#777] bg-[#f4f4f4]"
        >
          <svg viewBox="0 0 10 10" className="size-[9px]" aria-hidden="true">
            <path d={d} fill="none" stroke="#000" strokeWidth="1.800" />
          </svg>
        </button>
      ))}
    </span>
  );
}

function Dots() {
  return (
    <span className="flex w-4 shrink-0 flex-col gap-px">
      <span className="border-t border-dotted border-[#555]" />
      <span className="border-t border-dotted border-[#555]" />
      <span className="border-t border-dotted border-[#555]" />
      <span className="border-t border-dotted border-[#555]" />
    </span>
  );
}

function PanelTitle({ icon, title, rails = false }: { icon: string; title: string; rails?: boolean }) {
  return (
    <header className="flex h-[18px] shrink-0 items-center bg-[#f0f0f0] pr-px">
      <Icon name={icon} />
      <h2 className="ml-px whitespace-nowrap">{title}</h2>
      <span className="mx-1 flex min-w-0 flex-1 items-center justify-end">
        {rails ? <span className="h-[5px] flex-1 border-y border-[#777]" /> : null}
        <Dots />
        {rails ? <span className="h-[5px] flex-1 border-y border-[#777]" /> : null}
      </span>
      <PanelButtons />
    </header>
  );
}

const arrowPaths = {
  left: "M6 1v7L2 4.500z",
  right: "M3 1v7l4-3.500z",
  up: "M1 6h7L4.500 2z",
  down: "M1 3h7L4.500 7z",
};

type ScrollButtonProps = {
  dir: keyof typeof arrowPaths;
  muted?: boolean;
  narrow?: boolean;
};

function ScrollButton({ dir, muted = false, narrow = false }: ScrollButtonProps) {
  return (
    <button
      type="button"
      aria-label={`Scroll ${dir}`}
      className={`flex h-[15px] shrink-0 items-center justify-center border border-white border-r-[#777] border-b-[#777] bg-[#f0f0f0] ${
        narrow ? "w-[9px]" : "w-[15px]"
      }`}
    >
      <svg viewBox="0 0 9 9" className="size-[9px] shrink-0" aria-hidden="true">
        <path d={arrowPaths[dir]} fill={muted ? "#999" : "#000"} />
      </svg>
    </button>
  );
}

function HScroll({ thumb, muted = false, trough = "bg-[#f6f6f6]" }: { thumb: string; muted?: boolean; trough?: string }) {
  return (
    <div className={`flex h-4 shrink-0 items-center ${trough}`}>
      <ScrollButton dir="left" muted={muted} />
      <span className="flex h-[15px] flex-1">
        <span className={`border border-white border-r-[#777] border-b-[#777] bg-[#f0f0f0] ${thumb}`} />
      </span>
      <ScrollButton dir="right" muted={muted} />
    </div>
  );
}

function Toggle({ sign = "+" }: { sign?: string }) {
  return (
    <button
      type="button"
      aria-label={sign === "+" ? "Expand" : "Collapse"}
      className="flex size-[9px] shrink-0 items-center justify-center border border-[#8a94a8] bg-white"
    >
      <svg viewBox="0 0 7 7" className="size-[7px]" aria-hidden="true">
        <path d={sign === "+" ? "M1 3.500h5M3.500 1v5" : "M1 3.500h5"} stroke="#000" />
      </svg>
    </button>
  );
}

function ColumnMark() {
  return (
    <span className="flex w-2 shrink-0 items-center justify-center self-stretch border-r border-[#888]">
      <svg viewBox="0 0 6 7" className="h-[7px] w-[6px]" aria-hidden="true">
        <path d="M0 0h6L3 7z" fill="#555" />
      </svg>
    </span>
  );
}

function SimPanel() {
  return (
    <section className="flex w-[129px] shrink-0 flex-col">
      <div className="flex min-h-0 flex-1 flex-col border border-[#aaa] bg-white">
        <PanelTitle icon="simdoc" title="n - Default" />
        <div className="flex h-[17px] shrink-0 items-center gap-[2px] border-y border-[#888] bg-[#f0f0f0]">
          <ColumnMark />
          Instance
        </div>
        <ul className="min-h-0 flex-1 pt-[2px]">
          <li className="flex h-[16px] items-center bg-[#bfcddb] pl-1">
            <Toggle sign="-" />
            <span className="w-[6px] border-t border-[#888]" />
            <Icon name="cube" className="size-3" />
            <span className="ml-1">jietiao_tb</span>
          </li>
          <li className="flex h-[17px] items-center pl-5">
            <Toggle />
            <span className="w-[6px] border-t border-[#888]" />
            <Icon name="cube" className="size-3" />
            <span className="ml-1">u1</span>
          </li>
          {["#INITIAL#2", "#ALWAYS#8"].map((name) => (
            <li key={name} className="flex h-[17px] items-center pl-6">
              <span className="h-full w-px bg-[#888]" />
              <span className="w-[7px] border-t border-[#888]" />
              <Icon name="ball" />
              <span className="ml-1">{name}</span>
            </li>
          ))}
          <li className="flex h-[17px] items-center pl-4">
            <Icon name="capacity" />
            <span className="ml-1">#vsim_capacity#</span>
          </li>
        </ul>
        <HScroll thumb="w-[22px]" />
      </div>
      <div className="flex h-[23px] shrink-0 items-start pt-[2px]" role="tablist">
        <button type="button" role="tab" className="flex h-5 w-[53px] shrink-0 items-center gap-1 border border-l-0 border-[#555] bg-[#c4c4c4] pl-1">
          Library <span className="font-bold text-[#999]">×</span>
        </button>
        <button type="button" role="tab" aria-selected="true" className="flex h-5 w-[54px] shrink-0 items-center gap-1 border-r border-b border-[#333] bg-[#f0f0f0] pl-1">
          <Icon name="simdoc" className="size-[14px]" />
          sim <span className="font-bold text-[#999]">×</span>
        </button>
        <span className="flex flex-1 justify-end gap-px pt-px">
          <ScrollButton dir="left" narrow />
          <ScrollButton dir="right" narrow muted />
        </span>
      </div>
    </section>
  );
}

const objects = [
  { name: "clk", value: "1" },
  { name: "dout", value: "St0" },
  { name: "cnt", value: "010", parent: true },
  { name: "shuchu", value: "001", parent: true, selected: true },
  { name: "enable", value: "1" },
  { name: "code", value: "St1" },
];

function ObjectsPanel() {
  return (
    <section className="flex h-1/2 flex-col border border-[#aaa] bg-[#f0f0f0] px-px">
      <PanelTitle icon="shapes" title="Objects" rails />
      <div className="min-h-0 flex-1 overflow-hidden bg-[#535b8b]">
        <table className="w-full table-fixed border-collapse">
          <thead>
            <tr className="h-[17px] border-y border-[#888] bg-[#f0f0f0]">
              <th className="p-0 text-left font-normal">
                <span className="flex h-[15px] items-center gap-[2px]">
                  <ColumnMark />
                  Name
                </span>
              </th>
              <th className="w-[13px] overflow-hidden border-l border-[#888] p-0 text-left font-normal">Va</th>
            </tr>
          </thead>
          <tbody>
            {objects.map((item) => (
              <tr key={item.name} className={item.selected ? "bg-[#bfcddb] text-black" : "text-[#f0f0f0]"}>
                <td className="p-0">
                  <span className="flex h-[17px] items-center pl-[3px]">
                    {item.parent ? <Toggle /> : <span className="w-[9px]" />}
                    <span className={item.parent ? "w-[3px] border-t border-[#aaa]" : "w-[3px]"} />
                    <Icon name="diamond" />
                    <span className="ml-[3px]">{item.name}</span>
                  </span>
                </td>
                <td className="overflow-hidden p-0 whitespace-nowrap">{item.value}</td>
              </tr>
            ))}
          </tbody>
        </table>
      </div>
      <HScroll thumb="w-[44px]" />
    </section>
  );
}

function ProcessesPanel() {
  return (
    <section className="flex min-h-0 flex-1 flex-col border border-[#aaa] bg-[#f0f0f0] px-px">
      <PanelTitle icon="gear" title="ocesses (Active)" />
      <div className="flex min-h-0 flex-1">
        <div className="flex min-w-0 flex-1 flex-col">
          <div className="flex h-[17px] shrink-0 items-center gap-[2px] border-y border-[#888]">
            <ColumnMark />
            Name
          </div>
          <ul className="mb-1 min-h-0 flex-1 bg-[#8ca2ff] pt-[2px]">
            <li className="flex h-[17px] items-center gap-[3px] pl-4 text-[#f0f0f0]">
              <Icon name="ball" />
              #ALWAYS#8
            </li>
          </ul>
          <HScroll thumb="w-[23px]" />
        </div>
        <div className="mb-5 ml-[2px] flex w-[15px] flex-col justify-between bg-[#f6f6f6]">
          <ScrollButton dir="up" />
          <ScrollButton dir="down" />
        </div>
      </div>
    </section>
  );
}

const signals = [
  { name: "/jietiao_tb/clk", value: "0" },
  { name: "/jietiao_tb/dout", value: "St0" },
  { name: "/jietiao_tb/cnt", value: "00000011000", parent: true },
  { name: "/jietiao_tb/shuchu", value: "581", parent: true, analog: true },
  { name: "/jietiao_tb/enable", value: "1" },
  { name: "/jietiao_tb/code", value: "St1" },
];

// One bit of the code lasts 8.2 ns: two slow carrier cycles or four fast ones.
const PX_PER_NS = 26.24;
const BIT = 215;
const BITS = 10;

function carrierPath() {
  const points: string[] = [];
  for (let x = 0; x <= BIT * BITS; x += 1) {
    const cycles = Math.floor(x / BIT) % 2 === 0 ? 2 : 4;
    const phase = ((x % BIT) / BIT) * cycles * 2 * Math.PI;
    points.push(`${x},${(87 - 34 * Math.sin(phase)).toFixed(1)}`);
  }
  return `M${points.join("L")}`;
}

function bitPath(first: number, second: number) {
  let d = `M0 ${first}`;
  for (let i = 1; i <= BITS; i += 1) {
    d += `H${i * BIT - 0.5}V${i % 2 === 1 ? second : first}`;
  }
  return d;
}

const evenNs = Array.from({ length: 16 }, (_, i) => (i + 1) * 2);
const halfNs = Array.from({ length: 66 }, (_, i) => (i + 1) / 2);

function WaveCanvas() {
  return (
    <svg className="block h-full w-full bg-black" role="img" aria-label="Signal waveforms">
      {evenNs.map((t) => (
        <rect key={t} x={Math.round(t * PX_PER_NS) - 1} y="0" width="1" height="100%" fill="#777" />
      ))}
      <rect x="2" y="4" width="100%" height="12" fill="#0f0" />
      <path d={bitPath(31.5, 20.5)} fill="none" stroke="#00b400" />
      <rect x="2" y="36" width="100%" height="13" fill="#b0ffb0" />
      <path d="M2 42.500H2200" stroke="#1e5a1e" />
      <path d={carrierPath()} fill="none" stroke="#b0f0b0" strokeWidth="1.200" />
      <path d="M0 125.500H2200" stroke="#00b400" />
      <path d={bitPath(142.5, 154.5)} fill="none" stroke="#00b400" />
      <rect x="1" y="0" width="2" height="100%" fill="#ffd800" />
      <rect x="0" y="4" width="2" height="12" fill="#e04010" />
      <rect x="0" y="36" width="2" height="13" fill="#3020b0" />
    </svg>
  );
}

function Ruler() {
  return (
    <svg className="block h-full w-full bg-black text-[10px]" role="img" aria-label="Time ruler in nanoseconds">
      {halfNs.map((t) => (
        <rect
          key={t}
          x={Math.round(t * PX_PER_NS) - 1}
          y={t % 1 === 0 ? 0 : 3}
          width="1"
          height={t % 1 === 0 ? 7 : 4}
          fill="#00c800"
        />
      ))}
      <text x="4" y="19" fill="#00d000">ns</text>
      {evenNs.map((t) => (
        <text key={t} x={Math.round(t * PX_PER_NS) - 1} y="19" textAnchor="middle" fill="#00d000">
          {t} ns
        </text>
      ))}
      <path d="M0 22.500H2200" stroke="#888" />
      <rect x="1" y="0" width="2" height="22" fill="#ffd800" />
      <rect x="0.500" y="22.500" width="43" height="16" fill="#000" stroke="#c09a00" />
      <text x="2" y="35" fill="#e8c800">0.092 ns</text>
    </svg>
  );
}

function WavePanel() {
  return (
    <section className="-mr-1 flex min-w-0 flex-1 flex-col border-2 border-[#aeb4ba] bg-white">
      <header className="flex h-[17px] shrink-0 items-center gap-[2px] bg-[#9db4cf] pl-px">
        <Icon name="wavewin" className="size-[14px]" />
        <h2 className="mr-1 whitespace-nowrap">Wave - Default</h2>
        <span className="flex flex-1 items-center">
          <span className="h-[5px] flex-1 border-y border-[#26415a] bg-[#c8dcf0]" />
          <Dots />
          <span className="mr-1 h-[5px] flex-1 border-y border-[#26415a] bg-[#c8dcf0]" />
        </span>
        <PanelButtons />
      </header>
      <div className="mt-[2px] grid min-h-0 flex-1 grid-cols-[144px_60px_minmax(0,1fr)_15px] grid-rows-[19px_minmax(0,1fr)_39px_18px] gap-[3px] bg-[#e8e8e8] pl-[2px]">
        <div className="flex items-center gap-1 bg-[#808080] pl-2">
          <Icon name="shapes" className="size-[14px]" />
          <Arrow />
        </div>
        <div className="bg-[#808080] pr-1 text-right leading-[19px] text-[#f0f0f0]">Msgs</div>
        <div className="bg-black">
          <span className="ml-px block h-full w-[2px] bg-[#ffd800]" />
        </div>
        <div className="bg-[#808080]" />

        <ul className="border-l-[7px] border-white bg-[#808080]">
          {signals.map((signal) => (
            <li
              key={signal.name}
              className={`flex items-center pl-[5px] ${
                signal.analog ? "h-[72px] bg-white text-black" : "h-[17px] text-[#f0f0f0]"
              }`}
            >
              {signal.parent ? <Toggle /> : <span className="w-[9px]" />}
              <span className={signal.parent && !signal.analog ? "w-[3px] border-t border-[#ccc]" : "w-[3px]"} />
              <Icon name="diamond" />
              <span className="ml-[3px] whitespace-nowrap">{signal.name}</span>
            </li>
          ))}
          <li className="mr-1 flex h-px items-center" aria-hidden="true">
            <svg viewBox="0 0 4 7" className="h-[7px] w-1">
              <path d="M.5.500v6l3-3z" fill="none" stroke="#222" />
            </svg>
            <span className="h-px flex-1 bg-[#333]" />
          </li>
        </ul>
        <ul className="overflow-hidden bg-[#808080]">
          {signals.map((signal) => (
            <li
              key={signal.name}
              className={`flex items-center overflow-hidden pl-px ${
                signal.analog ? "h-[72px] bg-white text-black" : "h-[17px] text-[#f0f0f0]"
              }`}
            >
              {signal.value}
            </li>
          ))}
          <li className="mr-1 h-px bg-[#333]" aria-hidden="true" />
        </ul>
        <WaveCanvas />
        <div className="flex flex-col bg-[#f0f0f0]">
          <ScrollButton dir="up" />
          <span className="mt-12 h-[68px] bg-white" />
          <span className="flex-1" />
          <ScrollButton dir="down" />
        </div>

        <div className="flex flex-col bg-[#808080] text-[#f0f0f0]">
          <div className="flex h-[22px] items-center pr-2 pl-2">
            <Icon name="nowset" className="size-[11px]" />
            <Icon name="note" className="size-[11px]" />
            <Icon name="plus" className="size-[11px]" />
            <span className="flex-1 text-right">Now</span>
          </div>
          <div className="flex flex-1 items-center">
            <span className="flex w-[44px] pl-[10px]">
              <Icon name="lock" className="size-[11px]" />
              <Icon name="wrench" className="size-[11px]" />
              <Icon name="minus" className="size-[11px]" />
            </span>
            <span className="h-full flex-1 bg-white pr-2 text-right leading-[17px] text-black">Cursor 1</span>
          </div>
        </div>
        <div className="flex flex-col bg-[#808080] text-right text-[#f0f0f0]">
          <span className="h-[22px] pr-2 leading-[22px] whitespace-nowrap">2176.31 ns</span>
          <span className="flex-1 bg-white pr-2 leading-[17px] text-black">0.092 ns</span>
        </div>
        <Ruler />
        <div className="bg-[#808080]" />

        <div className="border-l-8 border-[#808080]">
          <HScroll thumb="w-0 opacity-0" muted />
        </div>
        <HScroll thumb="w-0 opacity-0" muted />
        <HScroll thumb="w-2" trough="bg-[#c8c8c8]" />
        <div className="bg-[#808080]" />
      </div>
    </section>
  );
}

const menus = ["File", "Edit", "View", "Compile", "Simulate", "Add", "Wave", "Tools", "Layout", "Bookmarks", "Window", "Help"];

function App() {
  return (
    <div className="relative flex h-screen overflow-hidden bg-[#f0f0f0] font-['DejaVu_Sans_Condensed','DejaVu_Sans',sans-serif] text-[10px] leading-4 text-[#222]">
      <div className="flex w-[7px] shrink-0 flex-col overflow-hidden border-r border-[#999] bg-[#e4e4e4]">
        <span className="mt-1 ml-[2px] size-3 rounded-full bg-[#3f86ad]" />
        <span className="mt-14 h-4 border border-[#888]" />
        <span className="mt-1 ml-1 h-3 bg-[#d8b45c]" />
        <span className="mt-80 h-6 border-y border-[#888]" />
        <span className="h-6 border-b border-[#888] bg-[#f0f0f0]" />
      </div>
      <main className="flex min-w-0 flex-1 flex-col border-t border-[#777] bg-[#c8c8c8]">
        <div className="flex h-[29px] shrink-0 items-center bg-white pl-2 font-['Open_Sans',sans-serif] text-[11px] text-black">
          <svg viewBox="0 0 13 15" className="h-[15px] w-[13px]" aria-hidden="true">
            <path d="M0 1h13" stroke="#2a2ae0" strokeWidth="2" />
            <path d="M1.500 14V5.500l5 5 5-5V14" fill="none" stroke="#000" strokeWidth="2.600" />
          </svg>
          <h1 className="ml-[5px] flex-1">ModelSim SE 10.1a</h1>
          <span className="flex gap-8 pr-[10px]">
            {["M0 5.500h10", "M.5.500h9v9h-9z", "M0 0l10 10M10 0L0 10"].map((d, i) => (
              <button key={d} type="button" aria-label={["Minimize", "Maximize", "Close window"][i]}>
                <svg viewBox="0 0 10 10" className="size-[10px]" aria-hidden="true">
                  <path d={d} fill="none" stroke="#000" />
                </svg>
              </button>
            ))}
          </span>
        </div>
        <nav className="flex h-5 shrink-0 items-center gap-[11px] bg-white pl-[6px] font-['Open_Sans',sans-serif] text-xs text-black">
          {menus.map((menu) => (
            <button key={menu} type="button">{menu}</button>
          ))}
        </nav>
        <Toolbars />
        <div className="flex min-h-0 flex-1 gap-[7px] border-t-[3px] border-[#f0f0f0] pl-px">
          <SimPanel />
          <div className="flex w-[151px] shrink-0 flex-col gap-[7px]">
            <ObjectsPanel />
            <ProcessesPanel />
          </div>
          <div className="flex min-w-0 flex-1 pb-px">
            <WavePanel />
          </div>
        </div>
        <footer className="mt-[7px] flex h-2 shrink-0 items-start overflow-hidden border-t border-[#999] bg-[#f4f4f4] pl-[3px]">
          <span className="mt-1 size-3 rounded-full border-2 border-[#666]" />
        </footer>
      </main>
      <p className="pointer-events-none absolute right-4 bottom-1 font-['Noto_Sans_CJK_SC',sans-serif] text-xl leading-8 font-light text-[#777] [text-shadow:1px_1px_0_#fff]">
        CSDN @通信小菜鸡-.-
      </p>
    </div>
  );
}

export default App;
